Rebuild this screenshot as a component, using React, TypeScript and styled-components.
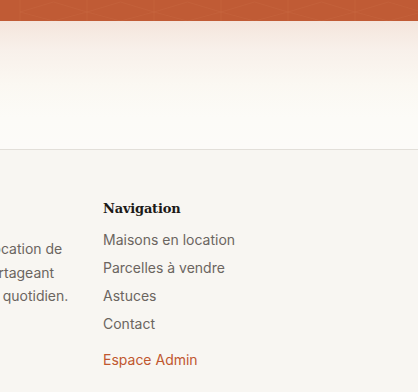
import React from "react";
import styled, { createGlobalStyle } from "styled-components";

const Global = createGlobalStyle`
  html, body { margin: 0; padding: 0; }
  body {
    width: 418px;
    height: 392px;
    overflow: hidden;
    background: #f8f6f2;
    font-family: Inter, "Noto Sans", sans-serif;
  }
`;

const Page = styled.div`
  display: flex;
  flex-direction: column;
  width: 418px;
  height: 392px;
  overflow: hidden;
`;

const TopBar = styled.header`
  position: relative;
  height: 21px;
  flex: none;
  background: #c05b35;
  overflow: hidden;
`;

const Pattern = styled.svg`
  position: absolute;
  inset: 0;
  width: 100%;
  height: 100%;
`;

const Hero = styled.section`
  height: 128px;
  flex: none;
  background: linear-gradient(180deg, #f4e5dc 0%, #f8f0ea 22%, #fbf8f2 50%, #fcfbf7 75%, #fcfbf8 100%);
  border-bottom: 1px solid #e2dfd9;
`;

const Footer = styled.footer`
  flex: 1;
  background: #f8f6f2;
  padding-top: 50px;
`;

const FooterGrid = styled.div`
  display: grid;
  grid-template-columns: 330px 200px;
  column-gap: 34px;
  margin-left: -261px;
`;

const About = styled.p`
  margin: 37px 0 0;
  font-size: 14px;
  line-height: 23.5px;
  color: #6b655f;
  white-space: nowrap;
`;

const NavCol = styled.nav`
  display: flex;
  flex-direction: column;
`;

const NavTitle = styled.h4`
  margin: 1px 0 13px;
  font-family: "DejaVu Serif", "Liberation Serif", serif;
  font-weight: 700;
  font-size: 13px;
  line-height: 16px;
  color: #1d1a17;
  letter-spacing: -0.2px;
`;

const NavList = styled.ul`
  list-style: none;
  margin: 0;
  padding: 0;
  display: flex;
  flex-direction: column;
  gap: 8px;
`;

const NavLink = styled.a<{ $accent?: boolean }>`
  display: block;
  font-size: 14px;
  line-height: 20px;
  color: ${(p) => (p.$accent ? "#c0572f" : "#6b655f")};
  text-decoration: none;
  margin-top: ${(p) => (p.$accent ? "8px" : "0")};
`;

export default function App() {
  const period = 67;
  const cols = Array.from({ length: 8 }, (_, i) => i * period + 20);
  return (
    <Page>
      <Global />
      <TopBar>
        <Pattern viewBox="0 0 418 21" preserveAspectRatio="none">
          {cols.map((x) => (
            <g key={x} stroke="#d0774f" strokeOpacity="0.2" strokeWidth="1" fill="none">
              <line x1={x} y1={0} x2={x} y2={21} />
              <line x1={x} y1={12} x2={x + period / 2} y2={2} />
              <line x1={x + period / 2} y1={2} x2={x + period} y2={12} />
              <line x1={x} y1={12} x2={x + period / 2} y2={21} />
              <line x1={x + period / 2} y1={21} x2={x + period} y2={12} />
            </g>
          ))}
        </Pattern>
      </TopBar>
      <Hero />
      <Footer>
        <FooterGrid>
          <About>
            Votre partenaire de confiance pour la location de
            <br />
            les maisons et la vente de parcelles, partageant
            <br />
            des conseils pratiques utiles pour votre quotidien.
          </About>
          <NavCol>
            <NavTitle>Navigation</NavTitle>
            <NavList>
              <li><NavLink href="#">Maisons en location</NavLink></li>
              <li><NavLink href="#">Parcelles à vendre</NavLink></li>
              <li><NavLink href="#">Astuces</NavLink></li>
              <li><NavLink href="#">Contact</NavLink></li>
              <li><NavLink href="#" $accent>Espace Admin</NavLink></li>
            </NavList>
          </NavCol>
        </FooterGrid>
      </Footer>
    </Page>
  );
}
